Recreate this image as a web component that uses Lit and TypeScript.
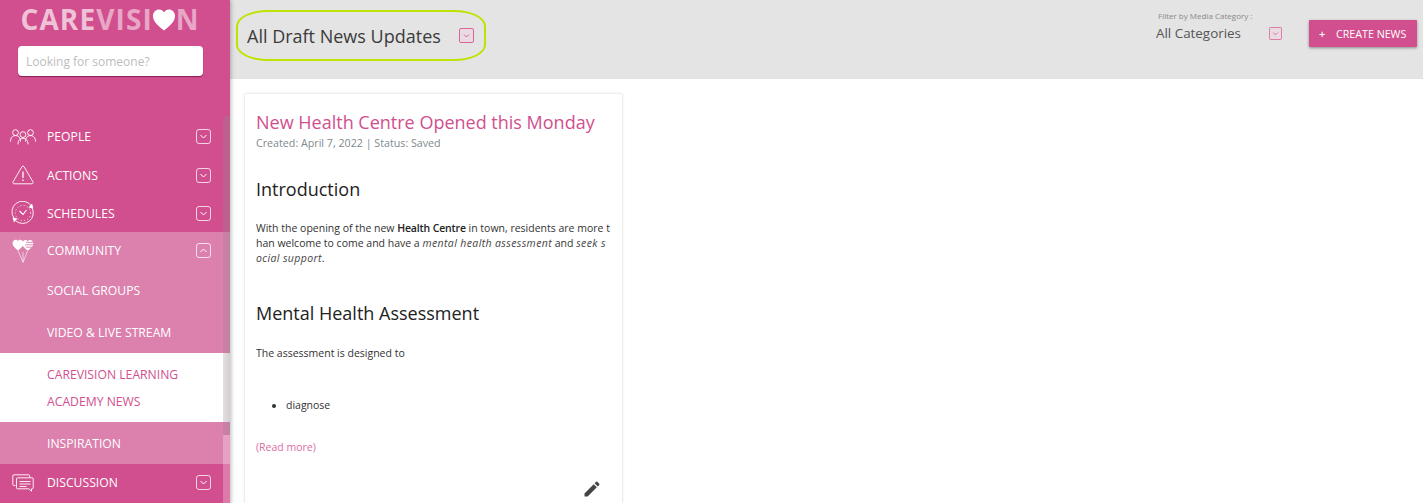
import { LitElement, html, css, svg } from "lit";
import { customElement } from "lit/decorators.js";

const chevron = (up = false) => html`<svg class="chev" viewBox="0 0 15 15" width="15" height="15" aria-hidden="true">
  <rect x=".5" y=".5" width="14" height="14" rx="2.5" fill="none" stroke="rgba(255,255,255,.75)"/>
  <path d=${up ? "M4.5 9 7.5 6 10.5 9" : "M4.5 6 7.5 9 10.5 6"} fill="none" stroke="#fff"/>
</svg>`;

const pinkChev = (s: number) => html`<svg viewBox="0 0 15 15" width=${s} height=${s} aria-hidden="true">
  <rect x=".5" y=".5" width="14" height="14" rx="1.5" fill="#e9dbe1" stroke="#d9659c"/>
  <path d="M5 6.5 7.5 9 10 6.5" fill="none" stroke="#d14f8e" stroke-width=".9"/>
</svg>`;

const person = (x: number, y: number, s: number) => svg`<circle cx=${x} cy=${y} r=${2.9 * s}/><path d="M${x - 5 * s} ${y + 9 * s}c0-4 2-6 ${5 * s}-6 ${3 * s} 0 ${5 * s} 2 ${5 * s} 6"/>`;

const heart = "M6 11.500C3 9 .5 7.300 .5 4.300 .5 2 2.200 .8 3.700 .8 4.700 .8 5.500 1.300 6 2.200 6.500 1.300 7.300 .8 8.300 .8 9.800 .8 11.500 2 11.500 4.300 11.500 7.300 9 9 6 11.500Z";

const icons: Record<string, unknown> = {
  people: html`<svg width="26" height="16" viewBox="0 0 26 16" fill="none" stroke="#fff" stroke-width=".9">
    ${person(5.5, 3.6, 1)}${person(20.5, 3.6, 1)}<circle cx="13" cy="5.6" r="2.9"/><path d="M8 15.4c0-4 2-6 5-6s5 2 5 6"/></svg>`,
  actions: html`<svg width="22" height="20" viewBox="0 0 22 20" fill="none" stroke="#fff" stroke-width=".9">
    <path d="M10 1.6 1 17a1.2 1.2 0 0 0 1 1.8h18a1.2 1.2 0 0 0 1-1.8L12 1.6a1.2 1.2 0 0 0-2 0Z"/>
    <path d="M11 6.5v6.5M11 14.5v1.6" stroke-width="1.3"/></svg>`,
  schedules: html`<svg width="24" height="24" viewBox="0 0 24 24" fill="none" stroke="#fff" stroke-width=".9">
    <path d="M3 17A10.500 10.500 0 0 1 20 4.500"/><path d="M21 7A10.500 10.500 0 0 1 5 20"/>
    <circle cx="12" cy="12" r="7.600" stroke-dasharray="1 2.300"/>
    <path d="M8.500 10 12 13.500 15.500 9" stroke-width="1.100"/>
    <path d="M22.500 7.500 17.500 6.500 21 2.500Z M1.500 16.500 6.500 17.500 3 21.500Z" fill="#fff" stroke="none"/></svg>`,
  community: html`<svg width="22" height="24" viewBox="0 0 22 24" fill="none" stroke="#fff" stroke-width=".6">
    <path d="M6 11.500 11 23.300 15.500 12M11 23.300 11 13"/>
    <path d=${heart} fill="#fff" stroke="none"/>
    <g transform="translate(9.800 .3)"><path d=${heart} fill="#fff" stroke="none"/></g>
    <path d="M14 3.300h8M13 5.800h9M14 8.200h6" stroke="#dc80ae" stroke-width=".9"/>
    </svg>`,
  discussion: html`<svg width="22" height="18" viewBox="0 0 22 18" fill="none" stroke="#fff" stroke-width=".9">
    <path d="M3.500 11.500H2a1.200 1.200 0 0 1-1.200-1.200V2A1.200 1.200 0 0 1 2 .8h14.500A1.200 1.200 0 0 1 17.700 2v1.500"/>
    <path d="M5.500 3.800h14.700a1 1 0 0 1 1 1v9a1 1 0 0 1-1 1h-.7v2.400l-2.600-2.400H5.500a1 1 0 0 1-1-1v-9a1 1 0 0 1 1-1Z" fill="#d14f8e"/>
    <path d="M7.500 7.500h11M7.500 10h11M7.500 12.500h7"/></svg>`,
};

@customElement("app-root")
export class AppRoot extends LitElement {
  static styles = css`
    :host { display: block; height: 503px; overflow: hidden; font-family: "Open Sans", sans-serif; background: #fff; }
    * { box-sizing: border-box; }
    .page { display: grid; grid-template-columns: 230px 1fr; height: 503px; }

    .side { position: relative; background: #d14f8e; box-shadow: 1px 0 4px rgba(0,0,0,.28); z-index: 2; display: flex; flex-direction: column; overflow: hidden; }
    .brand { height: 117px; flex: none; padding: 2px 0 0 18px; }
    .logo { display: flex; align-items: center; height: 35px; padding-left: 2.500px; font-size: 28px; font-weight: 700; letter-spacing: 1.1px; line-height: 35px; color: rgba(255,255,255,.5); }
    .logo .a { color: rgba(255,255,255,.66); }
    .logo .b { color: rgba(255,255,255,.5); }
    .logo svg { flex: none; margin-left: -1px; }
    .search { display: block; width: 185px; height: 30px; margin-top: 9px; border: 0; border-radius: 4px; padding: 0 8px; background: #fff; box-shadow: 0 1px 1px rgba(110,20,70,.8); font: 12px "Open Sans", sans-serif; outline: none; }
    .search::placeholder { color: #bdbdbd; opacity: 1; }

    .row { display: flex; align-items: center; flex: none; color: #fff; font-size: 12.200px; text-transform: uppercase; padding-left: 47px; position: relative; }
    .row .ic { position: absolute; left: 0; top: 0; bottom: 0; width: 47px; display: flex; align-items: center; justify-content: center; padding-right: 2px; }
    .row .chev { position: absolute; left: 196px; top: 50%; margin-top: -7.500px; }
    .h39 { height: 39px; } .h38 { height: 38px; } .h37 { height: 37px; } .h42 { height: 42px; }
    .light { background: #dc80ae; }
    .white { height: 69px; flex: none; background: #fff; color: #d14f8e; font-size: 12.200px; text-transform: uppercase; padding: 13px 0 0 47px; display: flex; flex-direction: column; gap: 10px; line-height: 17px; }
    .sbar { position: absolute; left: 223px; width: 7px; }
    .thumb { top: 116px; height: 319px; background: linear-gradient(90deg, rgba(150,130,140,.25), rgba(150,130,140,.4)); }
    .track { top: 435px; bottom: 0; background: rgba(255,255,255,.25); }

    main { min-width: 0; }
    header { height: 79px; background: #e4e4e4; display: flex; align-items: flex-start; padding-left: 6px; }
    .title { width: 250px; height: 51px; margin-top: 10px; flex: none; border: 2px solid #bde400; border-radius: 32px / 16px; display: flex; align-items: center; padding-left: 9px; font-size: 18px; color: #3b3b3b; white-space: nowrap; }
    .title svg { margin-left: 18px; flex: none; }
    .filter { margin-left: auto; width: 126px; padding-top: 10px; color: #555; white-space: nowrap; }
    .filter small { display: block; font-size: 8px; line-height: 11px; color: #888; padding-left: 2px; }
    .filter div { display: flex; align-items: center; font-size: 13.400px; line-height: 20px; margin-top: 2px; }
    .filter svg { margin-left: 28px; flex: none; }
    .create { width: 108px; height: 27px; margin: 20px 6px 0 27px; background: #d14f8e; color: #fff; display: flex; align-items: center; border-radius: 1px; box-shadow: 0 1px 3px rgba(0,0,0,.4); font-size: 10.700px; text-transform: uppercase; padding-left: 10px; white-space: nowrap; }
    .create b { width: 17px; font-weight: 600; font-size: 11px; }

    .card { width: 379px; height: 430px; margin: 14px 0 0 14px; border: 1px solid #eee; box-shadow: 0 0 3px rgba(0,0,0,.07); padding: 15px 12px 0 11px; position: relative; border-radius: 2px; color: #333; }
    h1 { margin: 0; font-size: 18px; line-height: 26px; font-weight: 400; color: #d14f8e; }
    .meta { font-size: 10.700px; line-height: 16px; color: #808a8f; }
    h2 { margin: 0; font-size: 18px; line-height: 26px; font-weight: 400; color: #222; }
    p, li { margin: 0; font-size: 10.500px; line-height: 15px; word-break: break-all; }
    .i { margin-top: 25px; }
    .pi { margin-top: 19px; }
    .m { margin-top: 34px; }
    .pm { margin-top: 20px; }
    ul { margin: 37px 0 0; padding: 0 0 0 30px; }
    strong { font-weight: 600; color: #222; letter-spacing: -.16px; }
    em { color: #444; letter-spacing: .38px; }
    .more { display: block; margin-top: 27px; font-size: 10.500px; line-height: 15px; color: #db6da3; }
    .pencil { position: absolute; left: 337px; top: 385px; }
  `;

  private row(label: string, h: string, icon?: string, chev?: "up" | "down", cls = "") {
    return html`<div class="row ${h} ${cls}">
      ${icon ? html`<span class="ic">${icons[icon]}</span>` : ""}
      <span>${label}</span>
      ${chev ? chevron(chev === "up") : ""}
    </div>`;
  }

  render() {
    return html`<div class="page">
      <aside class="side">
        <div class="brand">
          <div class="logo"><span class="a">CARE</span><span class="b">VISI</span><svg width="24" height="22" viewBox="0 0 24 22"><path fill="#fff" d="M12 21.500C6 16.500 1 12.500 1 7 1 3 4 .5 7 .5c2.200 0 4 1.200 5 3 1-1.800 2.800-3 5-3 3 0 6 2.500 6 6.500 0 5.500-5 9.500-11 14.500Z"/></svg><span>N</span></div>
          <input class="search" placeholder="Looking for someone?" />
        </div>
        ${this.row("People", "h39", "people", "down")}
        ${this.row("Actions", "h38", "actions", "down")}
        ${this.row("Schedules", "h38", "schedules", "down")}
        ${this.row("Community", "h37", "community", "up", "light")}
        ${this.row("Social Groups", "h42", undefined, undefined, "light")}
        ${this.row("Video & Live Stream", "h42", undefined, undefined, "light")}
        <div class="white"><span>Carevision Learning</span><span>Academy News</span></div>
        ${this.row("Inspiration", "h42", undefined, undefined, "light")}
        ${this.row("Discussion", "h37", "discussion", "down")}
        <div class="sbar thumb"></div>
        <div class="sbar track"></div>
      </aside>
      <main>
        <header>
          <div class="title"><span>All Draft News Updates</span>${pinkChev(15)}</div>
          <div class="filter">
            <small>Filter by Media Category :</small>
            <div><span>All Categories</span>${pinkChev(13)}</div>
          </div>
          <div class="create"><b>+</b><span>Create News</span></div>
        </header>
        <article class="card">
          <h1>New Health Centre Opened this Monday</h1>
          <div class="meta">Created: April 7, 2022 | Status: Saved</div>
          <h2 class="i">Introduction</h2>
          <p class="pi">With the opening of the new <strong>Health Centre</strong> in town, residents are more than welcome to come and have a <em>mental health assessment</em> and <em>seek social support</em>.</p>
          <h2 class="m">Mental Health Assessment</h2>
          <p class="pm">The assessment is designed to</p>
          <ul><li>diagnose</li></ul>
          <a class="more">(Read more)</a>
          <svg class="pencil" width="20" height="20" viewBox="0 0 24 24"><path fill="#444" d="M3 17.250V21h3.750L17.810 9.940l-3.750-3.750L3 17.250zM20.710 7.040a1 1 0 0 0 0-1.410l-2.340-2.340a1 1 0 0 0-1.410 0l-1.830 1.830 3.750 3.750 1.830-1.830z"/></svg>
        </article>
      </main>
    </div>`;
  }
}
